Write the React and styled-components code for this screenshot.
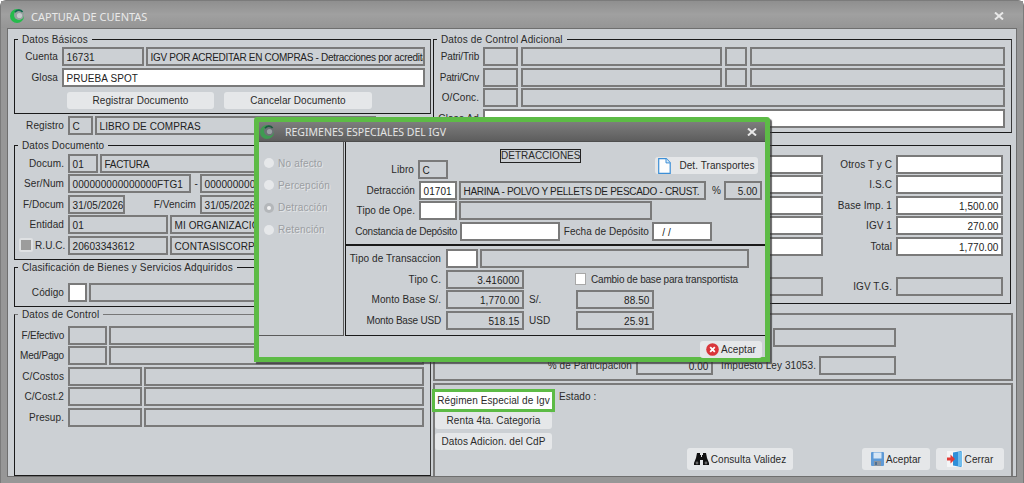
import React from 'react';
import styled, { createGlobalStyle } from 'styled-components';

const GlobalStyle = createGlobalStyle`
  html, body {
    margin: 0;
    padding: 0;
    background: #fff;
    overflow: hidden;
  }
  * {
    box-sizing: border-box;
  }
`;

const Window = styled.div`
  position: relative;
  display: flex;
  flex-direction: column;
  width: 1024px;
  height: 483px;
  background: #979797;
  border: 1px solid #7b7b7b;
  border-bottom: 0;
  border-radius: 6px 6px 0 0;
  font-family: 'Liberation Sans', Arial, sans-serif;
  font-size: 10px;
  letter-spacing: 0.08px;
  color: #2a2a2a;
`;

const TitleBar = styled.div`
  display: flex;
  align-items: center;
  flex: 0 0 27px;
  padding: 3px 19px 0 8px;
  gap: 6px;
  color: #e9e9e9;
  background: linear-gradient(#8f8f8f, #a0a0a0 50%, #959595);
`;

const TitleText = styled.div`
  flex: 1;
  font-family: 'Noto Sans', sans-serif;
  font-size: ${(p) => p.$size || 11}px;
  letter-spacing: 0;
`;

const Content = styled.div`
  flex: 1;
  display: flex;
  margin: 0 6px 6px;
  background: #ccd0d4;
  border: 1px solid #6f6f6f;
  min-height: 0;
`;

const LeftColumn = styled.div`
  display: flex;
  flex-direction: column;
  width: 425px;
  padding: 4px 0 0 6px;
`;

const RightColumn = styled.div`
  display: flex;
  flex-direction: column;
  flex: 1;
  padding-top: 4px;
`;

const Group = styled.fieldset`
  display: flex;
  flex-direction: column;
  gap: 1.5px;
  flex: ${(p) => (p.$grow ? 1 : 'none')};
  width: ${(p) => p.$w}px;
  min-width: 0;
  margin: ${(p) => p.$mt || 0}px 0 0;
  padding: ${(p) => p.$pt}px 0 ${(p) => (p.$grow ? 0 : 4)}px;
  border: 1px solid #1a1a1a;
  border-top-color: ${(p) => p.$top || '#1a1a1a'};
  border-right-color: #3a3a3a;
`;

const Legend = styled.legend`
  margin-left: 3px;
  padding: 0 4px;
  line-height: 13px;
  letter-spacing: 0.15px;
`;

const Row = styled.div`
  display: flex;
  align-items: center;
  gap: ${(p) => p.$gap || 2}px;
  height: 19px;
  margin-top: ${(p) => p.$mt || 0}px;
  padding-left: ${(p) => p.$pl || 0}px;
  padding-right: ${(p) => p.$pr || 0}px;
  justify-content: ${(p) => (p.$end ? 'flex-end' : 'flex-start')};
  flex: none;
`;

const Label = styled.div`
  flex: none;
  width: ${(p) => p.$w}px;
  padding-right: ${(p) => p.$pad ?? 2}px;
  text-align: ${(p) => (p.$left ? 'left' : 'right')};
  white-space: nowrap;
  letter-spacing: ${(p) => (p.$tight ? '-0.2px' : 'inherit')};
`;

const Field = styled.div`
  flex: none;
  width: ${(p) => p.$w}px;
  height: 19px;
  padding: 0 2.5px;
  line-height: 17px;
  overflow: hidden;
  white-space: nowrap;
  text-align: ${(p) => (p.$right ? 'right' : 'left')};
  letter-spacing: ${(p) => (p.$tight ? '-0.3px' : 'inherit')};
  background: ${(p) => (p.$white ? '#fff' : '#ccd0d4')};
  border: 2px solid #7a7a7a;
  color: #222;
`;

const Button = styled.button`
  flex: none;
  display: flex;
  align-items: center;
  justify-content: center;
  gap: 2px;
  width: ${(p) => p.$w}px;
  height: ${(p) => p.$h || 17}px;
  margin: 0;
  padding: 0;
  border: 0;
  border-radius: 3px;
  background: #e5e7e9;
  font: inherit;
  letter-spacing: inherit;
  white-space: nowrap;
  color: #2a2a2a;
`;

const ButtonRow = styled.div`
  display: flex;
  gap: 10px;
  height: 17px;
  margin-top: 3.5px;
  padding-left: 52px;
`;

const ColorBox = styled.div`
  flex: none;
  width: 14px;
  height: 14px;
  margin-left: 4px;
  background: #9c9c9c;
  border: 2px solid #dfe1e3;
  border-radius: 2px;
`;

const PlainPanel = styled.div`
  display: flex;
  flex-direction: column;
  gap: 1.5px;
  width: 578px;
  height: 159px;
  margin-top: 12px;
  padding-top: 9px;
  border: 1px solid #1a1a1a;
`;

const ParticipationPanel = styled.div`
  width: 580px;
  height: 68px;
  margin-top: 9px;
  padding-top: 13px;
  border: 2px solid #7a7a7a;
`;

const BottomPanel = styled.div`
  flex: 1;
  display: flex;
  width: 580px;
  margin-top: 2px;
  border: 2px solid #7a7a7a;
  border-bottom: 0;
`;

const SideButtons = styled.div`
  display: flex;
  flex-direction: column;
  gap: 3.5px;
  width: 117px;
  padding-top: 7px;
`;

const SpecialButton = styled(Button)`
  background: #fff;
  border-radius: 0;
  box-shadow: 0 0 0 3px #5dbb46;
`;

const StatusArea = styled.div`
  flex: 1;
  display: flex;
  flex-direction: column;
  justify-content: space-between;
  padding: 6px 7px 6px 7px;
`;

const Actions = styled.div`
  display: flex;
  justify-content: flex-end;
  gap: 6px;
`;

const ValidateButton = styled(Button)`
  margin-right: 63px;
`;

/* ventana flotante encima del formulario */
const Modal = styled.div`
  position: absolute;
  left: 253px;
  top: 116px;
  display: flex;
  flex-direction: column;
  width: 516px;
  height: 245px;
  background: #ccd0d4;
  border: 5px solid #5dbb46;
  border-radius: 3px 3px 0 0;
  box-shadow: 2px 2px 1px rgba(50, 50, 50, 0.75);
`;

const ModalTitle = styled.div`
  display: flex;
  align-items: center;
  flex: 0 0 20px;
  gap: 10px;
  padding: 0 8px 0 0;
  color: #e4e4e4;
  background: linear-gradient(#7d7d7d, #6a6a6a 60%, #5d5d5d);
  border-bottom: 1px solid #4e4e4e;
`;

const ModalBody = styled.div`
  display: flex;
  gap: 1px;
  flex: none;
  height: 194px;
`;

const RadioPanel = styled.div`
  display: flex;
  flex-direction: column;
  gap: 4.3px;
  width: 85px;
  padding-top: 12px;
  border-right: 1px solid #5a5a5a;
  border-bottom: 1px solid #5a5a5a;
`;

const RadioRow = styled.div`
  display: flex;
  align-items: center;
  gap: 4px;
  height: 18px;
  padding-left: 5px;
  letter-spacing: 0.2px;
  color: #9b9ea2;
  text-shadow: 1px 1px 0 #e4e6e8;
`;

const RadioDot = styled.span`
  display: flex;
  align-items: center;
  justify-content: center;
  width: 10px;
  height: 10px;
  border-radius: 50%;
  background: ${(p) => (p.$on ? '#b4b7ba' : '#e6e8ea')};
  &::after {
    content: '';
    width: 4px;
    height: 4px;
    border-radius: 50%;
    background: ${(p) => (p.$on ? '#f2f2f2' : 'transparent')};
  }
`;

const MainPanel = styled.div`
  flex: 1;
  display: flex;
  flex-direction: column;
  border-left: 1px solid #1a1a1a;
  border-bottom: 1px solid #1a1a1a;
`;

const TopSection = styled.div`
  display: flex;
  flex-direction: column;
  gap: 1.5px;
  height: 104px;
  padding-top: 18px;
  border-bottom: 2px solid #1a1a1a;
`;

const BottomSection = styled.div`
  display: flex;
  flex-direction: column;
  gap: 1.5px;
  padding-top: 3px;
`;

const SectionHeading = styled.div`
  flex: none;
  width: 81px;
  height: 14px;
  margin: -28px 0 0 49px;
  line-height: 12px;
  text-align: center;
  border: 1px solid #222;
  letter-spacing: 0;
`;

const TransportButton = styled(Button)`
  margin: -8px 0 0 71px;
  gap: 8px;
`;

const CheckBox = styled.span`
  flex: none;
  width: 11px;
  height: 12px;
  margin-left: 46px;
  background: #fff;
  border: 1px solid #a8a8a8;
`;

const ModalFooter = styled.div`
  display: flex;
  justify-content: flex-end;
  padding: 5px 3px 0 0;
`;

const LogoMark = ({ dim }) => (
  <svg width="16" height="16" viewBox="0 0 16 16">
    <circle cx="8" cy="8" r="7" fill={dim ? '#3f9a52' : '#25bb4c'} />
    <circle cx="10" cy="7" r="5" fill={dim ? '#6d7276' : '#98a0a0'} />
    <path d="M6 4.2A4.6 4.6 0 0 1 13.6 4" fill="none" stroke={dim ? '#1d5a40' : '#146a50'} strokeWidth="1.6" />
    <circle cx="10.5" cy="7.5" r="2.6" fill={dim ? '#9aa0a4' : '#c3c9cb'} />
  </svg>
);

const CloseIcon = () => (
  <svg width="10" height="8" viewBox="0 0 10 8">
    <path d="M1 .5l8 7M9 .5l-8 7" stroke="#e8e8e8" strokeWidth="2" />
  </svg>
);

const DocIcon = () => (
  <svg width="13" height="16" viewBox="0 0 13 16">
    <path d="M.7.7h7.5l4 4v10.6H.7z" fill="#fdfdfd" stroke="#3d8fd6" strokeWidth="1.2" />
    <path d="M8 .7v4.2h4.2" fill="#d7e9f8" stroke="#3d8fd6" />
  </svg>
);

const RedCloseIcon = () => (
  <svg width="13" height="13" viewBox="0 0 13 13">
    <circle cx="6.5" cy="6.5" r="6.3" fill="#d9353a" />
    <path d="M4.2 4.2l4.6 4.6M8.8 4.2l-4.6 4.6" stroke="#fff" strokeWidth="1.8" />
  </svg>
);

const BinocularsIcon = () => (
  <svg width="15" height="14" viewBox="0 0 15 14">
    <path d="M3 1h3v2H7v2h1V3h1V1h3l1 5 2 5v2H9V8H6v5H0v-2l2-5z" fill="#111" />
    <circle cx="3" cy="11" r="1.4" fill="#666" />
    <circle cx="12" cy="11" r="1.4" fill="#666" />
  </svg>
);

const SaveIcon = () => (
  <svg width="13" height="14" viewBox="0 0 13 14">
    <rect width="13" height="14" rx="1" fill="#5f9ad6" />
    <rect x="2.5" y="0.5" width="8" height="6" fill="#d6e6f5" />
    <rect x="3" y="9" width="7" height="5" fill="#8a94a0" />
    <rect x="4" y="10" width="2" height="3" fill="#4a6f96" />
  </svg>
);

const ExitIcon = () => (
  <svg width="16" height="16" viewBox="0 0 16 16">
    <rect width="16" height="16" fill="#f4f5f6" />
    <path d="M6 1.5 14.5 0v16L6 14.5z" fill="#2f8fd8" />
    <path d="M11 1h4v14h-4z" fill="#6fbcec" />
    <path d="M0 6.5h3.5V3.5L8 8l-4.5 4.5v-3H0z" fill="#e23a36" />
  </svg>
);

const App = () => (
  <Window>
    <GlobalStyle />
    <TitleBar>
      <LogoMark />
      <TitleText>CAPTURA DE CUENTAS</TitleText>
      <CloseIcon />
    </TitleBar>
    <Content>
      <LeftColumn>
        <Group $w={417} $pt={1}>
          <Legend>Datos Básicos</Legend>
          <Row>
            <Label $w={45}>Cuenta</Label>
            <Field $w={82}>16731</Field>
            <Field $w={279} $tight>IGV POR ACREDITAR EN COMPRAS - Detracciones por acreditar</Field>
          </Row>
          <Row>
            <Label $w={45}>Glosa</Label>
            <Field $w={363} $white>PRUEBA SPOT</Field>
          </Row>
          <ButtonRow>
            <Button $w={147}>Registrar Documento</Button>
            <Button $w={148}>Cancelar Documento</Button>
          </ButtonRow>
        </Group>
        <Row $mt={2}>
          <Label $w={52}>Registro</Label>
          <Field $w={25}>C</Field>
          <Field $w={281}>LIBRO DE COMPRAS</Field>
        </Row>
        <Group $w={417} $pt={2} $mt={4}>
          <Legend>Datos Documento</Legend>
          <Row>
            <Label $w={51}>Docum.</Label>
            <Field $w={30}>01</Field>
            <Field $w={320} $tight>FACTURA</Field>
          </Row>
          <Row>
            <Label $w={51}>Ser/Num</Label>
            <Field $w={123}>000000000000000FTG1</Field>
            <Label $w={5} $pad={0}>-</Label>
            <Field $w={120}>0000000000000000</Field>
          </Row>
          <Row>
            <Label $w={51}>F/Docum</Label>
            <Field $w={57}>31/05/2026</Field>
            <Label $w={71}>F/Vencim</Label>
            <Field $w={70}>31/05/2026</Field>
          </Row>
          <Row>
            <Label $w={51}>Entidad</Label>
            <Field $w={100}>01</Field>
            <Field $w={240}>MI ORGANIZACIÓN S.A.C.</Field>
          </Row>
          <Row>
            <ColorBox />
            <Label $w={31}>R.U.C.</Label>
            <Field $w={100}>20603343612</Field>
            <Field $w={240}>CONTASISCORP S.A.C.</Field>
          </Row>
        </Group>
        <Group $w={417} $pt={9} $mt={1}>
          <Legend>Clasificación de Bienes y Servicios Adquiridos</Legend>
          <Row>
            <Label $w={51}>Código</Label>
            <Field $w={19} $white />
            <Field $w={330} />
          </Row>
        </Group>
        <Group $w={417} $pt={5} $mt={1} $grow $top="#777">
          <Legend>Datos de Control</Legend>
          <Row>
            <Label $w={51} $tight>F/Efectivo</Label>
            <Field $w={39} />
            <Field $w={315} />
          </Row>
          <Row>
            <Label $w={51} $tight>Med/Pago</Label>
            <Field $w={39} />
            <Field $w={315} />
          </Row>
          <Row>
            <Label $w={51}>C/Costos</Label>
            <Field $w={74} />
            <Field $w={280} />
          </Row>
          <Row>
            <Label $w={51}>C/Cost.2</Label>
            <Field $w={74} />
            <Field $w={280} />
          </Row>
          <Row>
            <Label $w={51}>Presup.</Label>
            <Field $w={74} />
            <Field $w={280} />
          </Row>
        </Group>
      </LeftColumn>

      <RightColumn>
        <Group $w={579} $pt={1}>
          <Legend>Datos de Control Adicional</Legend>
          <Row $gap={3}>
            <Label $w={46} $pad={1} $tight>Patri/Trib</Label>
            <Field $w={35} />
            <Field $w={201} />
            <Field $w={22} />
            <Field $w={255} />
          </Row>
          <Row $gap={3}>
            <Label $w={46} $pad={1} $tight>Patri/Cnv</Label>
            <Field $w={35} />
            <Field $w={201} />
            <Field $w={22} />
            <Field $w={255} />
          </Row>
          <Row $gap={3}>
            <Label $w={46} $pad={1}>O/Conc.</Label>
            <Field $w={35} />
            <Field $w={484} />
          </Row>
          <Row $gap={3}>
            <Label $w={46} $pad={1}>Clase Ad</Label>
            <Field $w={522} $white />
          </Row>
        </Group>
        <PlainPanel>
          {[
            ['Otros T y C', ''],
            ['I.S.C', ''],
            ['Base Imp. 1', '1,500.00'],
            ['IGV 1', '270.00'],
            ['Total', '1,770.00'],
          ].map(([name, value]) => (
            <Row key={name} $end $pr={7}>
              <Field $w={120} $white />
              <Label $w={69}>{name}</Label>
              <Field $w={107} $white $right>{value}</Field>
            </Row>
          ))}
          <Row $end $pr={7} $mt={19.5}>
            <Field $w={120} />
            <Label $w={69}>IGV T.G.</Label>
            <Field $w={107} />
          </Row>
        </PlainPanel>
        <ParticipationPanel>
          <Row $end $pr={115}>
            <Field $w={123} />
          </Row>
          <Row $gap={3} $mt={9} $pl={78}>
            <Label $w={120} $pad={1}>% de Participación</Label>
            <Field $w={77} $right>0.00</Field>
            <Label $w={100} $pad={0}>Impuesto Ley 31053.</Label>
            <Field $w={77} />
          </Row>
        </ParticipationPanel>
        <BottomPanel>
          <SideButtons>
            <SpecialButton $w={117}>Régimen Especial de Igv</SpecialButton>
            <Button $w={117}>Renta 4ta. Categoria</Button>
            <Button $w={117}>Datos Adicion. del CdP</Button>
          </SideButtons>
          <StatusArea>
            <div>Estado :</div>
            <Actions>
              <ValidateButton $w={106} $h={22}><BinocularsIcon />Consulta Validez</ValidateButton>
              <Button $w={68} $h={22}><SaveIcon />Aceptar</Button>
              <Button $w={68} $h={22}><ExitIcon />Cerrar</Button>
            </Actions>
          </StatusArea>
        </BottomPanel>
      </RightColumn>
    </Content>

    <Modal>
      <ModalTitle>
        <LogoMark dim />
        <TitleText $size={10.5}>REGIMENES ESPECIALES DEL IGV</TitleText>
        <CloseIcon />
      </ModalTitle>
      <ModalBody>
        <RadioPanel>
          <RadioRow><RadioDot />No afecto</RadioRow>
          <RadioRow><RadioDot />Percepción</RadioRow>
          <RadioRow><RadioDot $on />Detracción</RadioRow>
          <RadioRow><RadioDot />Retención</RadioRow>
        </RadioPanel>
        <MainPanel>
          <TopSection>
            <Row $gap={3}>
              <Label $w={69} $pad={1}>Libro</Label>
              <Field $w={30}>C</Field>
              <SectionHeading>DETRACCIONES</SectionHeading>
              <TransportButton $w={103}><DocIcon />Det. Transportes</TransportButton>
            </Row>
            <Row $gap={2}>
              <Label $w={71}>Detracción</Label>
              <Field $w={38} $white>01701</Field>
              <Field $w={247} $tight>HARINA - POLVO Y PELLETS DE PESCADO - CRUST.</Field>
              <Label $w={14} $pad={1}>%</Label>
              <Field $w={38} $right>5.00</Field>
            </Row>
            <Row $gap={2}>
              <Label $w={71}>Tipo de Ope.</Label>
              <Field $w={38} $white />
              <Field $w={193} />
            </Row>
            <Row $gap={3}>
              <Label $w={111} $pad={0} $tight>Constancia de Depósito</Label>
              <Field $w={100} $white />
              <Label $w={86} $pad={0}>Fecha de Depósito</Label>
              <Field $w={60} $white>&nbsp;&nbsp;/ /</Field>
            </Row>
          </TopSection>
          <BottomSection>
            <Row>
              <Label $w={98} $pad={3}>Tipo de Transaccion</Label>
              <Field $w={32} $white />
              <Field $w={269} />
            </Row>
            <Row $gap={5}>
              <Label $w={95} $pad={0}>Tipo C.</Label>
              <Field $w={78} $right>3.416000</Field>
              <CheckBox />
              <Label $w={170} $left $tight>Cambio de base para transportista</Label>
            </Row>
            <Row $gap={5}>
              <Label $w={95} $pad={0}>Monto Base S/.</Label>
              <Field $w={78} $right>1,770.00</Field>
              <Label $w={42} $left>S/.</Label>
              <Field $w={78} $right>88.50</Field>
            </Row>
            <Row $gap={5}>
              <Label $w={95} $pad={0} $tight>Monto Base USD</Label>
              <Field $w={78} $right>518.15</Field>
              <Label $w={42} $left>USD</Label>
              <Field $w={78} $right>25.91</Field>
            </Row>
          </BottomSection>
        </MainPanel>
      </ModalBody>
      <ModalFooter>
        <Button $w={62}><RedCloseIcon />Aceptar</Button>
      </ModalFooter>
    </Modal>
  </Window>
);

export default App;
